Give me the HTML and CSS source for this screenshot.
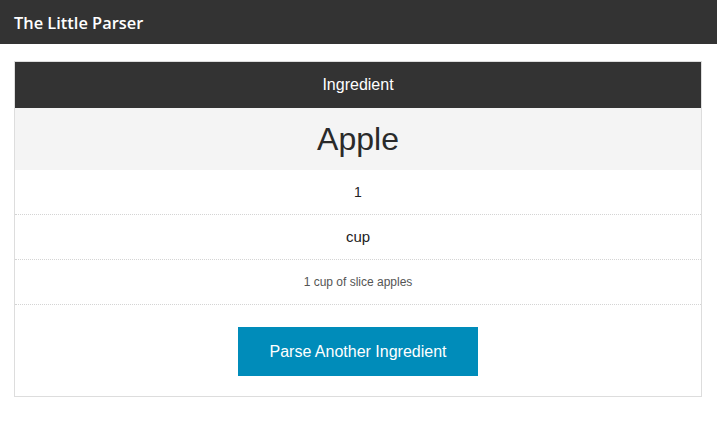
FILE: index.html
```html
<!DOCTYPE html>
<html>
<head>
<meta charset="utf-8">
<link rel="stylesheet" href="styles.css">
</head>
<body>
<header class="topbar"><span class="brand">The Little Parser</span></header>
<main class="card">
  <div class="card-head">Ingredient</div>
  <div class="name-row">Apple</div>
  <div class="row qty">1</div>
  <div class="row unit">cup</div>
  <div class="row desc">1 cup of slice apples</div>
  <div class="actions"><button class="btn">Parse Another Ingredient</button></div>
</main>
</body>
</html>
```
FILE: styles.css
```css
html, body { margin: 0; padding: 0; background: #fff; }
body { font-family: "Liberation Sans", Arial, sans-serif; color: #222; }
.topbar {
  height: 44px;
  background: #333;
  display: flex;
  align-items: center;
  padding-left: 14px;
}
.brand {
  font-family: "Open Sans", sans-serif;
  font-weight: 600;
  font-size: 16.4px;
  color: #fff;
}
.card {
  margin: 17px 15px 0 14px;
  border: 1px solid #ddd;
  text-align: center;
}
.card-head {
  background: #333;
  color: #fff;
  height: 46px;
  line-height: 46px;
  font-size: 16px;
}
.name-row {
  background: #f4f4f4;
  height: 62px;
  line-height: 62px;
  font-size: 32px;
  color: #2a2a2a;
}
.row {
  height: 44px;
  line-height: 44px;
  border-bottom: 1px dotted #d4d4d4;
}
.qty { font-size: 14px; color: #222; }
.unit { font-size: 15px; color: #222; }
.desc { font-size: 12px; color: #555; }
.actions {
  padding: 22px 0 20px;
  display: flex;
  justify-content: center;
}
.btn {
  width: 240px;
  height: 49px;
  border: 0;
  background: #008cba;
  color: #fff;
  font-family: "Liberation Sans", Arial, sans-serif;
  font-size: 16px;
  padding: 0;
  cursor: pointer;
}
```
